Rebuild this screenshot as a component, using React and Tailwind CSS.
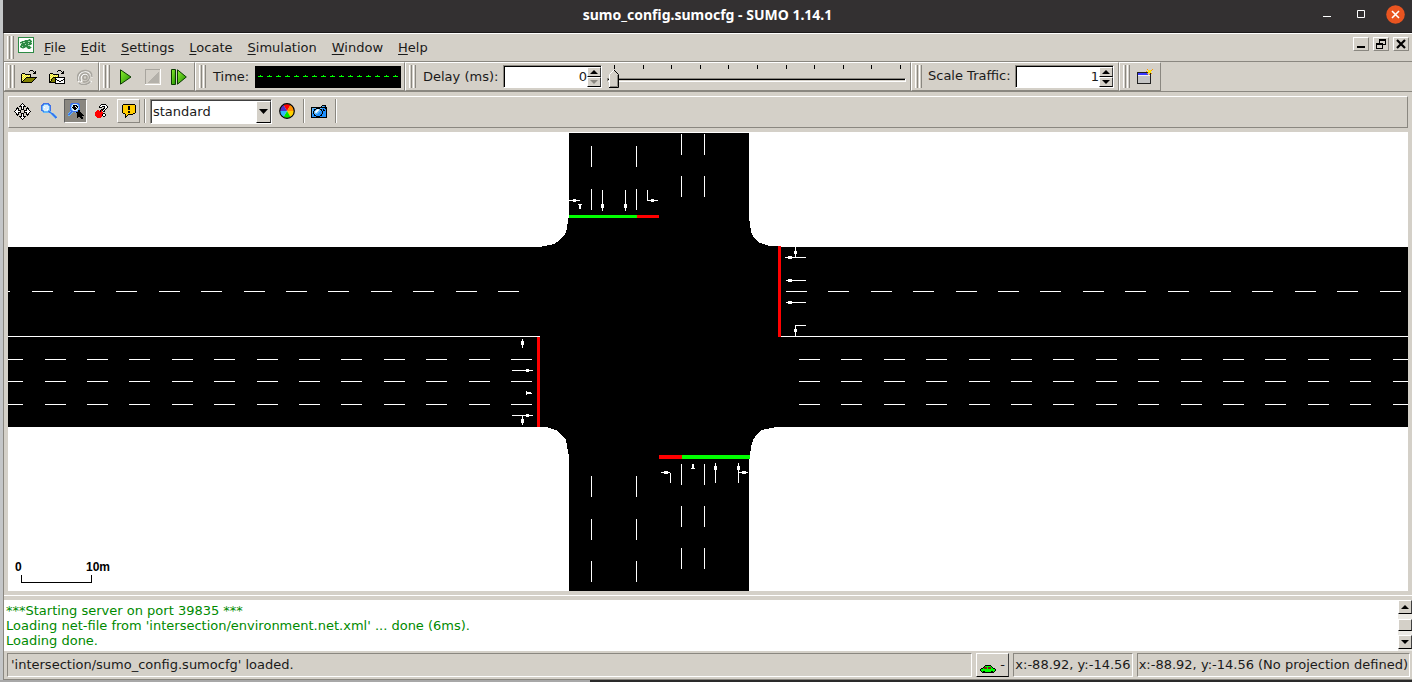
import React, { useState } from "react";

const PALETTE = {
  X: "#000000",
  W: "#ffffff",
  Y: "#ffff80",
  L: "#e8dc30",
  O: "#808000",
  G: "#8a8780",
  E: "#22cc00",
  F: "#00ff00",
  R: "#ff0000",
  M: "#802020",
  B: "#4070e8",
  C: "#60b8f8",
  P: "#d8ecfc",
  K: "#1e90ff",
  A: "#ffcc00",
  S: "#2e8b45",
  T: "#a8d8b0",
};

function Pixels({ rows, className = "" }) {
  const w = Math.max(...rows.map((r) => r.length));
  return (
    <svg width={w} height={rows.length} viewBox={`0 0 ${w} ${rows.length}`} shapeRendering="crispEdges" className={`shrink-0 ${className}`} aria-hidden="true">
      {rows.flatMap((row, y) =>
        [...row].map((c, x) => (PALETTE[c] ? <rect key={`${x}-${y}`} x={x} y={y} width="1" height="1" fill={PALETTE[c]} /> : null))
      )}
    </svg>
  );
}

const APP = [
  "SSSSSSSSSSSSSSSS",
  "SWWWWWWWWWWWWWWS",
  "SWWWWWWWWWTSTWWS",
  "SWWWWWTSSSSSSTWS",
  "SWWTSSSSSSTTSSWS",
  "SWSSSTTSSSSSSTWS",
  "SWTTSSSSSSTSSSWS",
  "SWWSSSSTSSSSSTWS",
  "SWTSSSSSSSTTWWWS",
  "SWSSTSSSSSSSTWWS",
  "SWTSSSSTTSSSSTWS",
  "SWWWTTWWWTSSTWWS",
  "SWWWWWWWWWWWWWWS",
  "SWWWWWWWWWWWWWWS",
  "SWWWWWWWWWWWWWWS",
  "SSSSSSSSSSSSSSSS",
];
const OPEN = [
  ".........XXX....",
  "........X...X.X.",
  ".............XX.",
  ".XXX........XXX.",
  "XYLYXXXXXX......",
  "XLYLYLYLYX......",
  "XYLYLYLYLX......",
  "XLYLYXXXXXXXXXXX",
  "XYLYXOOOOOOOOOX.",
  "XLYXOOOOOOOOOX..",
  "XYXOOOOOOOOOX...",
  "XXOOOOOOOOOX....",
  "XXXXXXXXXXX.....",
];
const OPEN_NET = [
  ".........XXX....",
  "........X...X.X.",
  ".............XX.",
  ".XXX........XXX.",
  "XYLYXXXXXX......",
  "XLYLYLYLYX......",
  "XYLYLYLYLX......",
  "XLYLXXXXXXXXXXXX",
  "XYLXOOXWWWWWWWWX",
  "XLXOOOXXWWWWWWXX",
  "XYXOOOXWXXWWXXWX",
  "XXOOOOXWWWXXWWWX",
  "XXXXXXXWWWWWWWWX",
  "......XXXXXXXXXX",
];
const MOVE = [
  "........X........",
  ".......XWX.......",
  "......XWWWX......",
  ".....XXXWXXX.....",
  "...X...XWX...X...",
  "..XXX..XWX..XXX..",
  "..XWX..XXX..XWX..",
  ".XWWXXX...XXXWWX.",
  "XWWWWWX...XWWWWWX",
  ".XWWXXX...XXXWWX.",
  "..XWX..XXX..XWX..",
  "..XXX..XWX..XXX..",
  "...X...XWX...X...",
  ".....XXXWXXX.....",
  "......XWWWX......",
  ".......XWX.......",
  "........X........",
];
const ZOOM = [
  "..BBBBBB........",
  ".BBCCCCBB.......",
  "BBCPPPPCBB......",
  "BCPPPPPPCB......",
  "BCPWPPPPCB......",
  "BCPPPPPPCB......",
  "BCPPPPWPCB......",
  "BBCPPPPCCB......",
  ".CBCCCCBBC......",
  "..CCCCCCBBC.....",
  ".........CBBC...",
  "..........CBBC..",
  "...........CBBC.",
  "............CBBC",
  ".............CBB",
  "..............C.",
];
const ZOOM_PICK = [
  "...BBBBBBBB.....",
  "..BBCPPPPCBB....",
  "..BCPXXXXPCB....",
  "..BCPXXWXXCB....",
  "..BPXXXXWXPB....",
  "..BCPXXXXPCB....",
  "..BCPPXXPPCB....",
  "..BBCPPPPCXX....",
  "..CBBBBBBBXX....",
  ".CBBC..CXXXXX...",
  "CBBC.....XXXXX..",
  "BBC......XXXXXX.",
  "CC.......XXXXXXX",
  ".........XXXXX..",
  ".........X..XXX.",
  ".............XX.",
];
const LOCATE = [
  "......XXXXX...",
  ".....XWWWWWX..",
  "....XWWXXXWWX.",
  "....XXX..XWWX.",
  "........XXWX..",
  "......XXXWX...",
  "..RR.XRXWX....",
  ".RRRRXR.XX....",
  "RRRRRRRR......",
  "RRRRRRRRXX....",
  "RRRRRRRXWWX...",
  "RRRRRRRXWWX...",
  ".RRRRRR.XX....",
  "..RRRR........",
];
const BUBBLE = [
  ".XXXXXXXXXXXX.",
  "XAAAAAAAAAAAAX",
  "XAAAAAXXAAAAAX",
  "XAAAAAXXAAAAAX",
  "XAAAAAXXAAAAAX",
  "XAAAAAXXAAAAAX",
  "XAAAAAAAAAAAAX",
  "XAAAAAXXAAAAAX",
  "XAAAAAXXAAAAAX",
  ".XXAAAAAAAAXX.",
  "...XAAXXXXX...",
  "...XAX........",
  "...XX.........",
  "...X..........",
];
const CAMERA = [
  "...........XXXX.",
  "..........XCCKX.",
  "XXXXXXXXXXXXXXXX",
  "XCCCCXXXXCCKKKXX",
  "XCKXXCPPCXXKXKKX",
  "XCKXCPWPCCXKXXKX",
  "XCXCPWPCCKKXKKKX",
  "XCXCPPCCKKKXKKKX",
  "XKXCCCCKKKKXKKKX",
  "XKKXCKKKKKXKKKKX",
  "XKKXXKKKKXXKKKKX",
  "XKKKKXXXXKKKKKKX",
  "XXXXXXXXXXXXXXXX",
];
const CAR = [
  ".....XXXXXX.....",
  "....XFFFFFFX....",
  "...XMMMFMMMFX...",
  ".XXFMMMFMMMFFXX.",
  "XFFFFFFFFFFFFFFX",
  "XFFFFFFFFFFFFFFX",
  ".XFXXFFFFFFXXFX.",
  "..XXXXXXXXXXXX..",
];

function Gear() {
  return (
    <svg width="16" height="16" viewBox="0 0 16 16" fill="none" aria-hidden="true">
      <g stroke="#ffffff" strokeWidth="1.500" transform="translate(1 1)">
        <path d="M1 12C-1 6 3 1 8 1.500c4 .3 6 3 6 6M3.500 12C1.500 7 5 3.500 8 4c3 .5 4 3 3 6" />
        <path d="M2 13c3 2.500 9 2 11.500-2" />
      </g>
      <g stroke="#a8a59e" strokeWidth="1.500">
        <path d="M1 12C-1 6 3 1 9 1.500c4 .3 6 3 6 6.500M3.500 12C1.500 7 5 3.500 8.500 4c3 .5 4.500 3 3.500 6-1 2.600-4 3.500-6 2.500" />
        <circle cx="8" cy="8.500" r="2" />
        <path d="M2 14c3 2.500 9 2 11.500-1.500" />
      </g>
    </svg>
  );
}

function GreenFill({ id }) {
  return (
    <linearGradient id={id} x1="0" y1="0" x2="1" y2="1">
      <stop offset="0" stopColor="#8cf030" />
      <stop offset="1" stopColor="#1e8c00" />
    </linearGradient>
  );
}

function PlayIcon() {
  return (
    <svg width="12" height="16" viewBox="0 0 12 16" aria-hidden="true">
      <defs><GreenFill id="play" /></defs>
      <path d="M.5.8v14.400L11 8z" fill="url(#play)" stroke="#0a3a00" />
    </svg>
  );
}

function StopIcon() {
  return (
    <svg width="16" height="16" viewBox="0 0 16 16" shapeRendering="crispEdges" aria-hidden="true">
      <path d="M0 0h16v16H0z" fill="#ffffff" />
      <path d="M0 0h15v15H0z" fill="#a8a59e" />
      <path d="M1 1h14v14H1z" fill="#d4d0c8" />
      <path d="M14 2v12H2z" fill="#b4b1aa" />
    </svg>
  );
}

function StepIcon() {
  return (
    <svg width="16" height="16" viewBox="0 0 16 16" aria-hidden="true">
      <defs><GreenFill id="step" /></defs>
      <path d="M.5.5h4v15h-4z" fill="url(#step)" stroke="#0a3a00" />
      <path d="M6.500.8v14.400L15.300 8z" fill="url(#step)" stroke="#0a3a00" />
    </svg>
  );
}

function WheelIcon() {
  return (
    <svg width="16" height="16" viewBox="-8 -8 16 16" aria-hidden="true">
      <path d="M0 0-3.500-6.100A7 7 0 0 1 3.500-6.100z" fill="#ff0000" />
      <path d="M0 0 3.500-6.100A7 7 0 0 1 7 0z" fill="#ff9000" />
      <path d="M0 0H7A7 7 0 0 1 3.500 6.100z" fill="#ffd000" />
      <path d="M0 0 3.500 6.100A7 7 0 0 1-3.500 6.100z" fill="#00e800" />
      <path d="M0 0-3.500 6.100A7 7 0 0 1-7 0z" fill="#30b8ff" />
      <path d="M0 0H-7A7 7 0 0 1-3.500-6.100z" fill="#5030c8" />
      <circle r="7.300" fill="none" stroke="#000" strokeWidth="1.200" />
    </svg>
  );
}

function NewWindowIcon() {
  return (
    <svg width="17" height="16" viewBox="0 0 17 16" shapeRendering="crispEdges" aria-hidden="true">
      <path d="M0 3h14v12H0z" fill="#202020" />
      <path d="M1 4h12v10H1z" fill="#c4c4c4" />
      <path d="M1 4h10v2H1z" fill="#3838ff" />
      <path d="M1 6h12v1H1z" fill="#f0f0f0" />
      <path d="M11 1h3v3h-3z" fill="#ffe800" />
      <path d="M10 0h1v1h-1zM15 0h1v1h-1zM14 1h1v1h-1zM10 4h1v1h-1zM14 4h1v1h-1zM12 5h1v1h-1zM9 2h1v1H9z" fill="#ff9800" />
    </svg>
  );
}

function Grip({ className = "" }) {
  return (
    <span className={`flex shrink-0 gap-px py-0.5 ${className}`} aria-hidden="true">
      <span className="w-[3px] border-l border-r border-l-white border-r-[#8a8780]" />
      <span className="w-[3px] border-l border-r border-l-white border-r-[#8a8780]" />
    </span>
  );
}

function Dock({ children, className = "" }) {
  return (
    <div className={`flex shrink-0 items-center border border-t-white border-l-white border-r-[#8a8780] border-b-[#8a8780] pl-[3px] ${className}`}>
      <Grip className="self-stretch" />
      {children}
    </div>
  );
}

function ToolButton({ label, children, className = "" }) {
  return (
    <button type="button" aria-label={label} className={`flex shrink-0 items-center justify-center ${className}`}>
      {children}
    </button>
  );
}

function Arrow({ down = false, disabled = false, wide = false }) {
  const fill = disabled ? "#8a8780" : "#000";
  return (
    <svg width={wide ? 9 : 8} height={wide ? 5 : 4} viewBox="0 0 8 4" preserveAspectRatio="none" className="shrink-0" aria-hidden="true">
      <path d={down ? "M0 0h8L4 4z" : "M0 4h8L4 0z"} fill={fill} />
    </svg>
  );
}

const RAISED = "border border-t-white border-l-white border-r-[#404040] border-b-black bg-[#d4d0c8]";

function Spinner({ id, initial, floor }) {
  const [value, setValue] = useState(initial);
  return (
    <div className="flex h-[23px] w-[99px] shrink-0 border border-t-[#8a8780] border-l-[#8a8780] border-r-white border-b-white">
      <div className="flex min-w-0 flex-1 border-t border-l border-black bg-white">
        <input id={id} value={value} onChange={(e) => setValue(e.target.value)} className="w-0 min-w-0 flex-1 bg-white text-right text-[13px] leading-4 outline-none" />
        <div className="flex w-3.5 flex-col">
          <button type="button" aria-label="Increase" onClick={() => setValue(Number(value) + 1)} className={`flex flex-1 items-center justify-center ${RAISED}`}>
            <Arrow />
          </button>
          <button type="button" aria-label="Decrease" onClick={() => setValue(Math.max(floor, Number(value) - 1))} className={`flex flex-1 items-center justify-center ${RAISED}`}>
            <Arrow down disabled={Number(value) === 0} />
          </button>
        </div>
      </div>
    </div>
  );
}

function DelaySlider() {
  return (
    <div className="relative ml-[5px] h-6 w-[299px]">
      <div className="flex justify-between pr-[5px] pl-[7px]" aria-hidden="true">
        {Array.from({ length: 11 }, (_, i) => (
          <span key={i} className="h-1 w-px bg-black" />
        ))}
      </div>
      <div className="mt-[9px] h-1 border-t border-r border-b border-l border-t-[#8a8780] border-r-white border-b-white border-l-[#8a8780]" aria-hidden="true">
        <div className="h-px bg-black" />
      </div>
      <svg className="absolute top-1 left-0.5" width="11" height="20" viewBox="0 0 11 20" aria-hidden="true">
        <path d="M0 5 5 0 10 5v14H0z" fill="#d4d0c8" />
        <path d="M.5 19V5.500L5 1" fill="none" stroke="#fff" />
        <path d="M5 1 9.500 5.500v13H0" fill="none" stroke="#000" />
        <path d="M8.500 6v11.500H1" fill="none" stroke="#8a8780" />
      </svg>
      <input type="range" aria-label="Delay" min="0" max="1000" defaultValue="0" className="absolute inset-0 w-full opacity-0" />
    </div>
  );
}

function Separator({ className = "" }) {
  return <span className={`h-6 w-0.5 shrink-0 border-l border-r border-l-[#8a8780] border-r-white ${className}`} aria-hidden="true" />;
}

const DASH = 21;
const PERIOD = 42.4;
const leftUpper = Array.from({ length: 13 }, (_, i) => Math.round(498 - i * PERIOD));
const leftLower = Array.from({ length: 13 }, (_, i) => Math.round(511 - i * PERIOD));
const rightUpper = Array.from({ length: 15 }, (_, i) => Math.round(786 + i * PERIOD));
const rightLower = Array.from({ length: 15 }, (_, i) => Math.round(799 + i * PERIOD));

const MARKS = [
  [569, 200, 11, 1], [573, 199, 3, 3], [578, 204, 4, 1], [579, 205, 2, 4],
  [602, 190, 1, 21], [601, 204, 3, 4], [625, 190, 1, 21], [624, 204, 3, 4],
  [647, 190, 1, 11], [647, 200, 11, 1], [651, 199, 3, 3],
  [795, 247, 1, 10], [794, 251, 3, 3], [785, 257, 21, 1], [788, 256, 4, 3],
  [786, 280, 20, 1], [788, 279, 4, 3], [786, 302, 20, 1], [788, 301, 4, 3],
  [795, 325, 11, 1], [795, 325, 1, 11], [794, 329, 3, 3],
  [522, 339, 1, 9], [521, 341, 3, 4], [512, 370, 21, 1], [526, 369, 3, 3],
  [526, 391, 1, 4], [527, 392, 4, 2], [531, 393, 1, 1],
  [512, 415, 21, 1], [526, 414, 3, 3], [522, 415, 1, 10], [521, 419, 3, 4],
  [661, 472, 9, 1], [664, 471, 4, 3], [670, 473, 1, 10],
  [692, 464, 2, 4], [691, 468, 4, 1],
  [715, 463, 1, 20], [714, 466, 3, 4],
  [738, 463, 1, 20], [737, 466, 3, 4], [738, 472, 10, 1], [742, 471, 4, 3],
];

function Intersection() {
  return (
    <svg viewBox="8 132 1400 459" preserveAspectRatio="xMidYMid slice" shapeRendering="crispEdges" className="absolute inset-0 h-full w-full" role="img" aria-label="Road intersection">
      <path d="M8 247h532l14-3 6-4 5-6 2-5 1-9 1-4V133h180v84l2 15 3 6 6 5 9 3h10v1h629v180H776l-14 3-5 4-4 6-2 7-1 8v4h-1v132H569V455l-1-3-2-12-4-5-6-5-10-3H8z" fill="#000" />
      <g fill="#fff">
        <path d="M8 336h532v1H8zM781 336h627v1H781z" />
        {leftUpper.map((x) => <rect key={x} x={x} y="291" width={DASH} height="1" />)}
        {rightUpper.map((x) => <rect key={x} x={x} y="291" width={DASH} height="1" />)}
        {[359, 381, 404].map((y) => [...leftLower, ...rightLower].map((x) => <rect key={`${x}-${y}`} x={x} y={y} width={DASH} height="1" />))}
        {[591, 636].map((x) => [146, 189, 476, 519, 561].map((y) => <rect key={`${x}-${y}`} x={x} y={y} width="1" height={DASH} />))}
        {[681, 704].map((x) => [134, 176, 464, 506, 548].map((y) => <rect key={`${x}-${y}`} x={x} y={y} width="1" height={DASH} />))}
        {MARKS.map(([x, y, w, h]) => <rect key={`${x}-${y}-${w}-${h}`} x={x} y={y} width={w} height={h} />)}
      </g>
      <path d="M569 215h68v3h-68zM682 455h68v4h-68z" fill="#00ff00" />
      <path d="M637 215h22v3h-22zM659 455h23v4h-23zM778 246h3v91h-3zM537 337h3v90h-3z" fill="#ff0000" />
    </svg>
  );
}

const MENUS = ["File", "Edit", "Settings", "Locate", "Simulation", "Window", "Help"];
const STATUS = "flex items-center border border-t-[#8a8780] border-l-[#8a8780] border-r-white border-b-white whitespace-nowrap";
const MDI = "flex h-3.5 w-4 items-center justify-center border border-t-white border-l-white border-r-[#8a8780] border-b-[#8a8780]";

export default function App() {
  return (
    <div className="flex h-screen flex-col overflow-hidden bg-[#c4c6c8] font-['DejaVu_Sans',sans-serif] text-[13px] leading-4 text-[#1a1a1a]">
      <div className="ml-[3px] flex min-h-0 flex-1 flex-col">
        <header className="grid h-[33px] shrink-0 grid-cols-[1fr_auto_1fr] items-center border-b border-[#1c1a1a] bg-[#333031] pb-0.5">
          <span />
          <h1 className="font-['Noto_Sans',sans-serif] text-[14px] leading-5 font-bold text-white">sumo_config.sumocfg - SUMO 1.14.1</h1>
          <div className="flex items-center justify-end gap-6 pr-[7px] pb-0.5">
            <button type="button" aria-label="Minimize" className="h-5 w-2.5">
              <svg width="10" height="20" viewBox="0 0 10 20" shapeRendering="crispEdges" aria-hidden="true"><path d="M1 12h8v1H1z" fill="#fff" /></svg>
            </button>
            <button type="button" aria-label="Maximize" className="h-5 w-2.5">
              <svg width="10" height="20" viewBox="0 0 10 20" aria-hidden="true"><path d="M1.500 6.500h7v7h-7z" fill="none" stroke="#fff" /></svg>
            </button>
            <button type="button" aria-label="Close" className="-ml-1 flex h-5 w-[19px] items-center justify-center">
              <svg width="19" height="19" viewBox="0 0 19 19" aria-hidden="true">
                <circle cx="9.500" cy="9.500" r="9.300" fill="#e95420" />
                <path d="m6 6 7 7m0-7-7 7" stroke="#fff" strokeWidth="1.600" />
              </svg>
            </button>
          </div>
        </header>

        <main className="flex min-h-0 flex-1 flex-col border-l border-b border-l-[#8a8780] border-b-[#8a8780] bg-[#d4d0c8]">
          <nav className="flex h-[29px] shrink-0 items-center border-t border-b border-t-white border-b-[#8a8780] pr-[3px] pl-[3px]">
            <Grip className="self-stretch" />
            <Pixels rows={APP} className="mr-[3px] mb-1.5 ml-1" />
            {MENUS.map((m) => (
              <button key={m} type="button" className="pr-2 pl-[7px]">
                <span className="underline underline-offset-2">{m[0]}</span>{m.slice(1)}
              </button>
            ))}
            <div className="mb-2 ml-auto flex gap-1">
              <button type="button" aria-label="Minimize view" className={MDI}>
                <svg width="10" height="10" viewBox="0 0 10 10" aria-hidden="true"><path d="M1 7h8v2H1z" /></svg>
              </button>
              <button type="button" aria-label="Restore view" className={MDI}>
                <svg width="10" height="10" viewBox="0 0 10 10" shapeRendering="crispEdges" aria-hidden="true">
                  <path d="M3 0h7v6H7V5h2V2H4v2H3zM0 4h7v6H0zm1 2v3h5V6z" fillRule="evenodd" />
                </svg>
              </button>
              <button type="button" aria-label="Close view" className={MDI}>
                <svg width="10" height="10" viewBox="0 0 10 10" aria-hidden="true"><path d="m1 1 8 8m0-8-8 8" stroke="#000" strokeWidth="2.200" /></svg>
              </button>
            </div>
          </nav>

          <div className="flex h-[30px] shrink-0 border-b border-[#8a8780]">
            <Dock className="w-[95px]">
              <ToolButton label="Open simulation" className="w-7"><Pixels rows={OPEN} /></ToolButton>
              <ToolButton label="Open network" className="w-7"><Pixels rows={OPEN_NET} /></ToolButton>
              <ToolButton label="Reload" className="w-7"><Gear /></ToolButton>
            </Dock>
            <Dock className="w-24">
              <ToolButton label="Run" className="ml-1 w-6"><PlayIcon /></ToolButton>
              <ToolButton label="Stop" className="w-[30px]"><StopIcon /></ToolButton>
              <ToolButton label="Step" className="w-[22px]"><StepIcon /></ToolButton>
            </Dock>
            <Dock className="w-[210px]">
              <span className="w-[49px] pl-[7px]">Time:</span>
              <svg width="146" height="22" viewBox="0 0 146 22" shapeRendering="crispEdges" role="img" aria-label="No time" className="bg-black">
                {Array.from({ length: 16 }, (_, i) => (
                  <path key={i} d={`M${3 + i * 9} 10h5v1h-5zM${5 + i * 9} 9h1v1h-1z`} fill="#00ff00" />
                ))}
              </svg>
            </Dock>
            <Dock className="w-[506px]">
              <label htmlFor="delay" className="w-[87px] pl-[7px]">Delay (ms):</label>
              <Spinner id="delay" initial={0} floor={0} />
              <DelaySlider />
            </Dock>
            <Dock className="w-52">
              <label htmlFor="scale" className="w-[93px] pb-0.5 pl-1.5">Scale Traffic:</label>
              <Spinner id="scale" initial={1} floor={0} />
            </Dock>
            <Dock className="w-[42px]">
              <ToolButton label="New view" className="ml-[7px]"><NewWindowIcon /></ToolButton>
            </Dock>
          </div>

          <div className="mx-1 my-1 flex h-8 shrink-0 items-center border border-t-white border-l-white border-r-[#8a8780] border-b-[#8a8780] pb-0.5">
            <ToolButton label="Pan" className="ml-[5px]"><Pixels rows={MOVE} /></ToolButton>
            <ToolButton label="Zoom" className="ml-2.5"><Pixels rows={ZOOM} /></ToolButton>
            <ToolButton label="Zoom to cursor" className="ml-[7px] h-6 w-[23px] border border-t-[#606060] border-l-[#606060] border-r-white border-b-white bg-[#8a8780]">
              <Pixels rows={ZOOM_PICK} />
            </ToolButton>
            <ToolButton label="Locate" className="ml-2"><Pixels rows={LOCATE} /></ToolButton>
            <ToolButton label="Tooltips" className="ml-2 h-6 w-[23px] border border-t-white border-l-white border-r-[#8a8780] border-b-[#8a8780]">
              <Pixels rows={BUBBLE} />
            </ToolButton>
            <Separator className="ml-1" />
            <div className="relative ml-1 h-[25px] w-[122px] border border-t-[#8a8780] border-l-[#8a8780] border-r-white border-b-white">
              <select aria-label="View settings" className="block h-full w-full appearance-none border-t border-l border-[#404040] bg-white px-px text-[13px] leading-4 outline-none">
                <option>standard</option>
              </select>
              <span className={`pointer-events-none absolute top-px right-0 bottom-0 flex w-[15px] items-center justify-center ${RAISED}`} aria-hidden="true">
                <Arrow down wide />
              </span>
            </div>
            <ToolButton label="Edit colors" className="ml-[7px]"><WheelIcon /></ToolButton>
            <Separator className="ml-2" />
            <ToolButton label="Snapshot" className="ml-1.5"><Pixels rows={CAMERA} /></ToolButton>
            <Separator className="ml-2" />
          </div>

          <section className="relative mr-1 ml-1 min-h-0 flex-1 overflow-hidden bg-white">
            <Intersection />
            <div className="absolute bottom-2 left-[7px] font-['Liberation_Sans',sans-serif] text-[12px] leading-4 font-bold text-black">
              <div className="flex w-[95px] justify-between"><span>0</span><span>10m</span></div>
              <div className="ml-1.5 h-2 w-[71px] border-r border-b border-l border-black" />
            </div>
          </section>

          <div className="mt-1 h-[5px] shrink-0 border-t border-white" />
          <section className="flex h-[51px] shrink-0 bg-white">
            <div className="flex-1 pt-[3px] pl-0.5 leading-[15px] text-[#008a00]">
              <p>***Starting server on port 39835 ***</p>
              <p>Loading net-file from 'intersection/environment.net.xml' ... done (6ms).</p>
              <p>Loading done.</p>
            </div>
            <div className="flex w-3.5 flex-col justify-between bg-[#ebe9e4] pb-0.5">
              <button type="button" aria-label="Scroll up" className={`flex h-3.5 items-center justify-center ${RAISED}`}><Arrow /></button>
              <span className={`h-3 ${RAISED}`} />
              <button type="button" aria-label="Scroll down" className={`flex h-3.5 items-center justify-center ${RAISED}`}><Arrow down /></button>
            </div>
          </section>

          <footer className="flex h-7 shrink-0 gap-1 pt-0.5 pr-0.5 pb-0.5 pl-[3px]">
            <div className={`min-w-0 flex-1 pl-[3px] ${STATUS}`}>'intersection/sumo_config.sumocfg' loaded.</div>
            <button type="button" aria-label="Vehicles" className={`flex w-[33px] items-center gap-1 pl-[3px] ${RAISED}`}>
              <Pixels rows={CAR} className="mt-2" />-
            </button>
            <div className={`px-px ${STATUS}`}>x:-88.92, y:-14.56</div>
            <div className={`px-px ${STATUS}`}>x:-88.92, y:-14.56 (No projection defined)</div>
          </footer>
        </main>
      </div>
      <div className="flex h-0.5 shrink-0 bg-[#a8a8a8]" aria-hidden="true">
        <span className="ml-[590px] flex-1 bg-[#2a2a2a]" />
      </div>
    </div>
  );
}
